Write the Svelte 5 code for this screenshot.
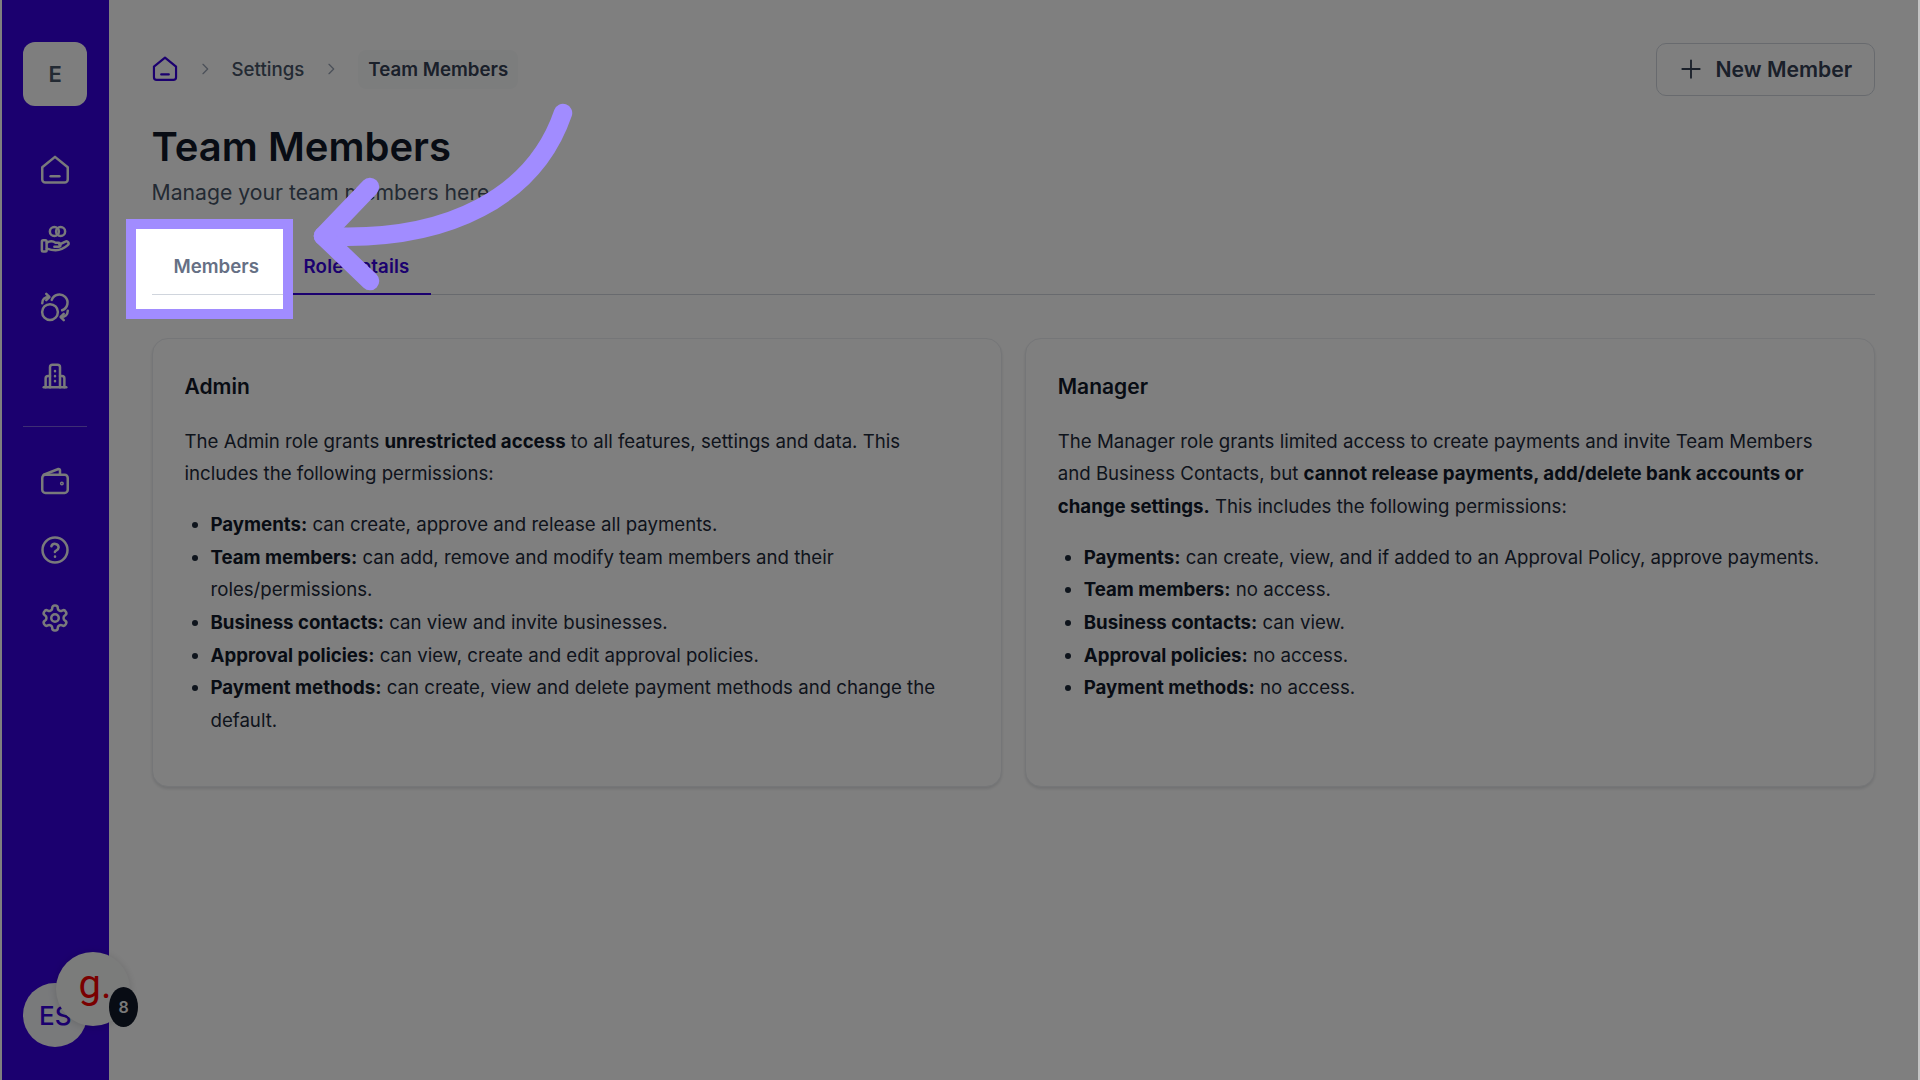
<script lang="ts">
  const adminPerms = [
    { k: 'Payments:', v: 'can create, approve and release all payments.' },
    { k: 'Team members:', v: 'can add, remove and modify team members and their roles/permissions.' },
    { k: 'Business contacts:', v: 'can view and invite businesses.' },
    { k: 'Approval policies:', v: 'can view, create and edit approval policies.' },
    { k: 'Payment methods:', v: 'can create, view and delete payment methods and change the default.' },
  ];
  const managerPerms = [
    { k: 'Payments:', v: 'can create, view, and if added to an Approval Policy, approve payments.' },
    { k: 'Team members:', v: 'no access.' },
    { k: 'Business contacts:', v: 'can view.' },
    { k: 'Approval policies:', v: 'no access.' },
    { k: 'Payment methods:', v: 'no access.' },
  ];
  const house = 'M1.800 9.800 12 1.500l10.200 8.300V19.500a2.500 2.500 0 0 1-2.500 2.500H4.300a2.500 2.500 0 0 1-2.500-2.500z';
  const gear = 'M12.22 2h-.44a2 2 0 0 0-2 2v.18a2 2 0 0 1-1 1.73l-.43.25a2 2 0 0 1-2 0l-.15-.08a2 2 0 0 0-2.73.73l-.22.38a2 2 0 0 0 .73 2.73l.15.1a2 2 0 0 1 1 1.72v.51a2 2 0 0 1-1 1.74l-.15.09a2 2 0 0 0-.73 2.73l.22.38a2 2 0 0 0 2.73.73l.15-.08a2 2 0 0 1 2 0l.43.25a2 2 0 0 1 1 1.73V20a2 2 0 0 0 2 2h.44a2 2 0 0 0 2-2v-.18a2 2 0 0 1 1-1.73l.43-.25a2 2 0 0 1 2 0l.15.08a2 2 0 0 0 2.73-.73l.22-.39a2 2 0 0 0-.73-2.73l-.15-.08a2 2 0 0 1-1-1.74v-.5a2 2 0 0 1 1-1.74l.15-.09a2 2 0 0 0 .73-2.73l-.22-.38a2 2 0 0 0-2.73-.73l-.15.08a2 2 0 0 1-2 0l-.43-.25a2 2 0 0 1-1-1.73V4a2 2 0 0 0-2-2z';
</script>

<div class="app">
  <aside class="side">
    <div class="org">E</div>
    <nav class="nav first">
      <svg viewBox="0 0 24 24"><path d={house} /><path d="M8.500 17h7" /></svg>
      <svg viewBox="0 0 24 24"><circle cx="11.500" cy="6" r="3.600" /><circle cx="16.500" cy="6" r="3.600" /><rect x="1.500" y="13" width="3.800" height="9" rx="1" /><path d="M5.500 15c2.500-1.800 4.500-1.800 7 0h2.300a1.600 1.600 0 0 1 0 3.200h-3.300" /><path d="m15.500 16.500 4.800-2.400a1.700 1.700 0 0 1 1.900 2.800C19 19.800 16 21 12.500 21c-2.500 0-4.700-.5-7-1.300" /></svg>
      <svg viewBox="0 0 24 24"><circle cx="8" cy="16" r="6.300" /><path d="M9.400 6.300A6.500 6.500 0 1 1 17.700 14.600" /><path d="M1.800 9c0-3 2-5 5.200-5" /><path d="M5 1.500 7.500 4 5 6.500" /><path d="M22.200 15c0 3-2 5-5.200 5" /><path d="M19 22.500 16.500 20l2.500-2.500" /></svg>
      <svg viewBox="0 0 24 24"><path d="M3 21h18" /><path d="M8 21V5a2 2 0 0 1 2-2h4a2 2 0 0 1 2 2v16" /><path d="M4.500 21v-7a2 2 0 0 1 2-2H8" /><path d="M19.500 21v-7a2 2 0 0 0-2-2H16" /><path d="M12 8v.1M12 12v.1M12 16v.1" /></svg>
    </nav>
    <div class="rule"></div>
    <nav class="nav">
      <svg viewBox="0 0 24 24"><path d="M16 7V3.400a1 1 0 0 0-1.300-1L3 7" /><rect x="1.800" y="7" width="20.400" height="14.500" rx="2.500" /><circle cx="17.500" cy="14" r=".6" /></svg>
      <svg viewBox="0 0 24 24"><circle cx="12" cy="12" r="10" /><path d="M9.100 9a3 3 0 0 1 5.800 1c0 2-3 2.800-3 3.500" /><path d="M12 17.200v.1" /></svg>
      <svg viewBox="0 0 24 24"><path d={gear} /><circle cx="12" cy="12" r="3" /></svg>
    </nav>
    <div class="people">
      <div class="me">ES</div>
    </div>
  </aside>

  <main class="main">
    <header class="top">
      <div class="crumbs">
        <svg class="crumb-home" viewBox="0 0 24 24"><path d={house} /><path d="M8.500 17h7" /></svg>
        <svg class="chev" viewBox="0 0 24 24"><path d="m9 5 7 7-7 7" /></svg>
        <span class="crumb">Settings</span>
        <svg class="chev" viewBox="0 0 24 24"><path d="m9 5 7 7-7 7" /></svg>
        <span class="crumb current">Team Members</span>
      </div>
      <button class="new">
        <svg viewBox="0 0 24 24"><path d="M12 2.500v19M2.500 12h19" /></svg>
        New Member
      </button>
    </header>

    <h1>Team Members</h1>
    <p class="sub">Manage your team members here</p>

    <div class="tabs">
      <div class="tab spot">Members</div>
      <div class="tab active">Role details</div>
    </div>

    <div class="cards">
      <section class="card">
        <h2>Admin</h2>
        <p>The Admin role grants <b>unrestricted access</b> to all features, settings and data. This includes the following permissions:</p>
        <ul>
          {#each adminPerms as p}
            <li><b>{p.k}</b> {p.v}</li>
          {/each}
        </ul>
      </section>
      <section class="card">
        <h2>Manager</h2>
        <p>The Manager role grants limited access to create payments and invite Team Members and Business Contacts, but <b>cannot release payments, add/delete bank accounts or change settings.</b> This includes the following permissions:</p>
        <ul>
          {#each managerPerms as p}
            <li><b>{p.k}</b> {p.v}</li>
          {/each}
        </ul>
      </section>
    </div>
  </main>

  <div class="guide">
    <span class="g">g.</span>
    <span class="count">8</span>
  </div>

  <div class="dim"></div>
  <div class="edge"></div>

  <svg class="arrow" viewBox="0 0 1920 1080">
    <path d="M563 113C535 195 450 243 323 236" />
    <path d="M370 187 323 236 370 281" />
  </svg>
</div>

<style>
  :global(body) {
    margin: 0;
    font-family: Inter, "Noto Sans", sans-serif;
    background: #fff;
  }
  .app {
    position: relative;
    display: flex;
    height: 100vh;
    overflow: hidden;
    padding-left: 2px;
    box-sizing: border-box;
    color: #101828;
  }

  .side {
    width: 107px;
    flex: none;
    box-sizing: border-box;
    padding: 42px 0.500px 0 0;
    background: #3700de;
    display: flex;
    flex-direction: column;
    align-items: center;
  }
  .org {
    width: 64px;
    height: 64px;
    border-radius: 12px;
    background: #fcfcfd;
    color: #475467;
    font-size: 22px;
    font-weight: 600;
    display: flex;
    align-items: center;
    justify-content: center;
  }
  .nav {
    display: flex;
    flex-direction: column;
    gap: 38.700px;
  }
  .nav.first { margin-top: 49px; }
  .nav svg {
    display: block;
    width: 30px;
    height: 30px;
    fill: none;
    stroke: #f2f4f7;
    stroke-width: 2;
    stroke-linecap: round;
    stroke-linejoin: round;
  }
  .rule {
    width: 64px;
    height: 1px;
    background: #7d5ce8;
    margin: 35px 0 39px;
  }
  .people {
    margin-top: auto;
    padding-bottom: 33px;
  }
  .me {
    width: 64px;
    height: 64px;
    border-radius: 50%;
    background: #f2f4f7;
    color: #3700de;
    font-size: 26px;
    font-weight: 500;
    display: flex;
    align-items: center;
    justify-content: center;
  }

  .main {
    flex: 1;
    min-width: 0;
    box-sizing: border-box;
    padding: 43px 45px 0 42.500px;
  }
  .top {
    display: flex;
    justify-content: space-between;
    align-items: center;
    height: 52px;
  }
  .crumbs {
    display: flex;
    align-items: center;
    font-size: 18.700px;
    font-weight: 500;
    color: #475467;
  }
  .crumb-home {
    width: 26px;
    height: 26px;
    fill: none;
    stroke: #3700de;
    stroke-width: 2;
    stroke-linecap: round;
    stroke-linejoin: round;
  }
  .chev {
    width: 16px;
    height: 16px;
    margin: 0 19px;
    fill: none;
    stroke: #98a2b3;
    stroke-width: 2;
    stroke-linecap: round;
    stroke-linejoin: round;
  }
  .crumb.current {
    padding: 8px 10px;
    border-radius: 8px;
    background: #f9fafb;
    color: #344054;
    font-weight: 600;
  }
  .new {
    display: flex;
    align-items: center;
    gap: 14px;
    width: 219.500px;
    height: 53px;
    box-sizing: border-box;
    padding: 0 0 0 23px;
    background: #fff;
    border: 1px solid #d0d5dd;
    border-radius: 10px;
    color: #344054;
    font: 600 21.200px Inter, sans-serif;
  }
  .new svg {
    width: 22px;
    height: 22px;
    fill: none;
    stroke: #344054;
    stroke-width: 2;
    stroke-linecap: round;
  }

  h1 {
    margin: 25px 0 0;
    font-size: 40px;
    line-height: 54px;
    font-weight: 600;
    color: #101828;
  }
  .sub {
    margin: 3px 0 0;
    font-size: 21.200px;
    line-height: 30px;
    color: #475467;
  }

  .tabs {
    display: flex;
    margin-top: 30px;
    border-bottom: 1px solid #d0d5dd;
    height: 57px;
    box-sizing: content-box;
  }
  .tab {
    padding: 0 22px;
    font-size: 18.700px;
    font-weight: 600;
    line-height: 59px;
    height: 57px;
    box-sizing: border-box;
    position: relative;
    color: #667085;
  }
  .tab.active {
    color: #3700de;
    border-bottom: 2px solid #3700de;
    height: 58px;
    letter-spacing: 0.150px;
  }
  .spot {
    z-index: 11;
    width: 130px;
    box-sizing: border-box;
  }
  .spot::before {
    content: "";
    position: absolute;
    z-index: -1;
    left: -16px;
    top: -8px;
    width: 147px;
    height: 80px;
    background: #fff;
    outline: 10px solid #a18cff;
  }
  .spot::after {
    content: "";
    position: absolute;
    left: 0;
    right: -1px;
    top: 57px;
    height: 1px;
    background: #d0d5dd;
  }

  .cards {
    display: grid;
    grid-template-columns: 1fr 1fr;
    gap: 23px;
    margin-top: 43px;
  }
  .card {
    height: 449px;
    box-sizing: border-box;
    padding: 33px 32px 0;
    background: #fff;
    border: 1px solid #eaecf0;
    border-radius: 16px;
    box-shadow: 0 2px 3px rgba(16, 24, 40, 0.12);
    font-size: 18.650px;
    line-height: 32.700px;
    color: #1d2939;
  }
  h2 {
    margin: 0 0 22.500px;
    font-size: 21px;
    line-height: 30px;
    font-weight: 600;
    color: #101828;
  }
  p { margin: 0; }
  b { font-weight: 650; color: #101828; }
  ul {
    margin: 18px 0 0;
    padding-left: 26px;
  }

  .guide {
    position: absolute;
    left: 56px;
    top: 952px;
    width: 74px;
    height: 74px;
    border-radius: 50%;
    background: #f7f8f7;
    box-shadow: 0 1px 8px rgba(0, 0, 0, 0.15);
    display: flex;
    align-items: center;
    justify-content: center;
  }
  .g {
    font-family: Roboto, sans-serif;
    font-size: 40px;
    line-height: 40px;
    margin: -9px 0 0 4px;
    color: #f50000;
  }
  .count {
    position: absolute;
    left: 53px;
    top: 35px;
    width: 29px;
    height: 40px;
    border-radius: 50%;
    background: #101828;
    color: #f2f2f2;
    font-size: 16px;
    font-weight: 600;
    display: flex;
    align-items: center;
    justify-content: center;
  }

  .dim {
    position: absolute;
    inset: 0;
    z-index: 10;
    background: rgba(0, 0, 0, 0.5);
  }
  .edge {
    position: absolute;
    top: 0;
    right: 0;
    bottom: 0;
    width: 2px;
    z-index: 11;
    background: #c4c4c4;
  }
  .arrow {
    position: absolute;
    inset: 0;
    width: 1920px;
    height: 1080px;
    z-index: 12;
    fill: none;
    stroke: #a18cff;
    stroke-width: 18.500;
    stroke-linecap: round;
    stroke-linejoin: round;
  }
</style>
